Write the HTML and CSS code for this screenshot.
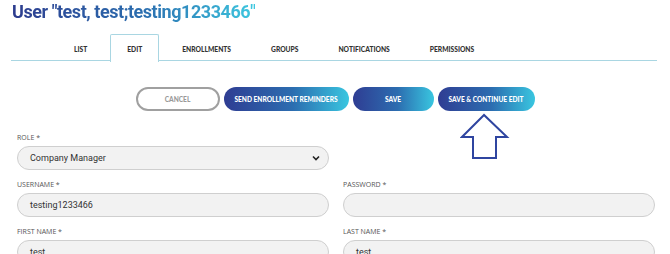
FILE: index.html
```html
<!doctype html>
<html>
  <head>
    <title>Edit user</title>
    <meta charset="utf-8" />
    <link rel="stylesheet" href="styles.css">
  </head>
  <body>
    <h1 class="page-title"><span>User "test, test;testing1233466"</span></h1>

    <ul class="tabs">
      <li class="tab">LIST</li>
      <li class="tab active">EDIT</li>
      <li class="tab">ENROLLMENTS</li>
      <li class="tab">GROUPS</li>
      <li class="tab">NOTIFICATIONS</li>
      <li class="tab">PERMISSIONS</li>
    </ul>

    <div class="actions">
      <button class="btn btn-cancel">CANCEL</button>
      <button class="btn btn-primary btn-send">SEND ENROLLMENT REMINDERS</button>
      <button class="btn btn-primary btn-save">SAVE</button>
      <button class="btn btn-primary btn-continue">SAVE &amp; CONTINUE EDIT</button>
      <svg class="pointer" width="50" height="48" viewBox="0 0 50 48">
        <polygon points="24,2 2,24 13,24 13,45 36,45 36,24 47,24" fill="none" stroke="#2f45a0" stroke-width="2" stroke-linejoin="miter"/>
      </svg>
    </div>

    <form class="user-form">
      <div class="field">
        <label>ROLE *</label>
        <div class="select">
          <span>Company Manager</span>
          <svg class="chevron" width="8" height="6" viewBox="0 0 8 6"><path d="M1 1.5 L4 4.5 L7 1.5" fill="none" stroke="#222" stroke-width="1.6"/></svg>
        </div>
      </div>
      <div class="field"></div>
      <div class="field">
        <label>USERNAME *</label>
        <div class="input">testing1233466</div>
      </div>
      <div class="field">
        <label>PASSWORD *</label>
        <div class="input"></div>
      </div>
      <div class="field">
        <label>FIRST NAME *</label>
        <div class="input">test</div>
      </div>
      <div class="field">
        <label>LAST NAME *</label>
        <div class="input">test</div>
      </div>
    </form>
  </body>
</html>
```

FILE: styles.css
```css
* {
	padding:0;
	margin:0;
	box-sizing:border-box;
}

html, body {
	overflow:hidden;
}

body {
	background-color:white;
	font-family:"Lato", "Liberation Sans", sans-serif;
	width:670px;
	height:254px;
}

.page-title {
	padding:0 0 0 12px;
	height:34px;
	font-family:"Roboto", sans-serif;
	font-weight:700;
	font-size:18px;
	line-height:24px;
	letter-spacing:-0.45px;
}

.page-title span {
	background:linear-gradient(90deg, #2d3c8e 0%, #2b6fb0 55%, #3ec8e0 100%);
	-webkit-background-clip:text;
	background-clip:text;
	color:transparent;
}

.tabs {
	list-style:none;
	display:flex;
	gap:6px;
	margin:0 13px 0 11px;
	padding-left:46px;
	height:27px;
	border-bottom:1px solid #a9d6e2;
}

.tab {
	padding:0 16px;
	height:27px;
	line-height:28px;
	font-size:6.7px;
	font-weight:900;
	color:#333;
	border:1px solid transparent;
	border-bottom:none;
}

.tab.active {
	border-color:#a9d6e2;
	background-color:white;
	height:28px;
	margin-bottom:-1px;
	border-radius:2px 2px 0 0;
}

.actions {
	position:relative;
	display:flex;
	justify-content:center;
	gap:4px;
	margin-top:26px;
	height:24px;
}

.btn {
	height:24px;
	border-radius:12px;
	border:none;
	font-family:"Lato", sans-serif;
	font-weight:900;
	font-size:6.6px;
	color:white;
}

.btn-cancel {
	width:84px;
	background-color:white;
	border:2px solid #a0a0a0;
	color:#9a9a9a;
}

.btn-primary {
	background:linear-gradient(90deg, #2f3d93 0%, #2c6db0 55%, #39c6e0 100%);
}

.btn-send { width:125px; }
.btn-save { width:81px; }
.btn-continue { width:97px; }

.pointer {
	position:absolute;
	left:460px;
	top:26px;
}

.user-form {
	display:grid;
	grid-template-columns:312px 312px;
	column-gap:14px;
	padding:23px 0 0 17px;
}

.field {
	height:47px;
}

.field label {
	display:block;
	height:12px;
	font-family:"Open Sans", sans-serif;
	font-size:7px;
	line-height:8px;
	color:#555;
}

.input, .select {
	display:flex;
	align-items:center;
	justify-content:space-between;
	height:24px;
	padding:0 8px 0 12px;
	background-color:#f2f2f2;
	border:1px solid #cfcfcf;
	border-radius:12px;
	font-family:"Roboto", sans-serif;
	font-size:9px;
	color:#333;
}
```
